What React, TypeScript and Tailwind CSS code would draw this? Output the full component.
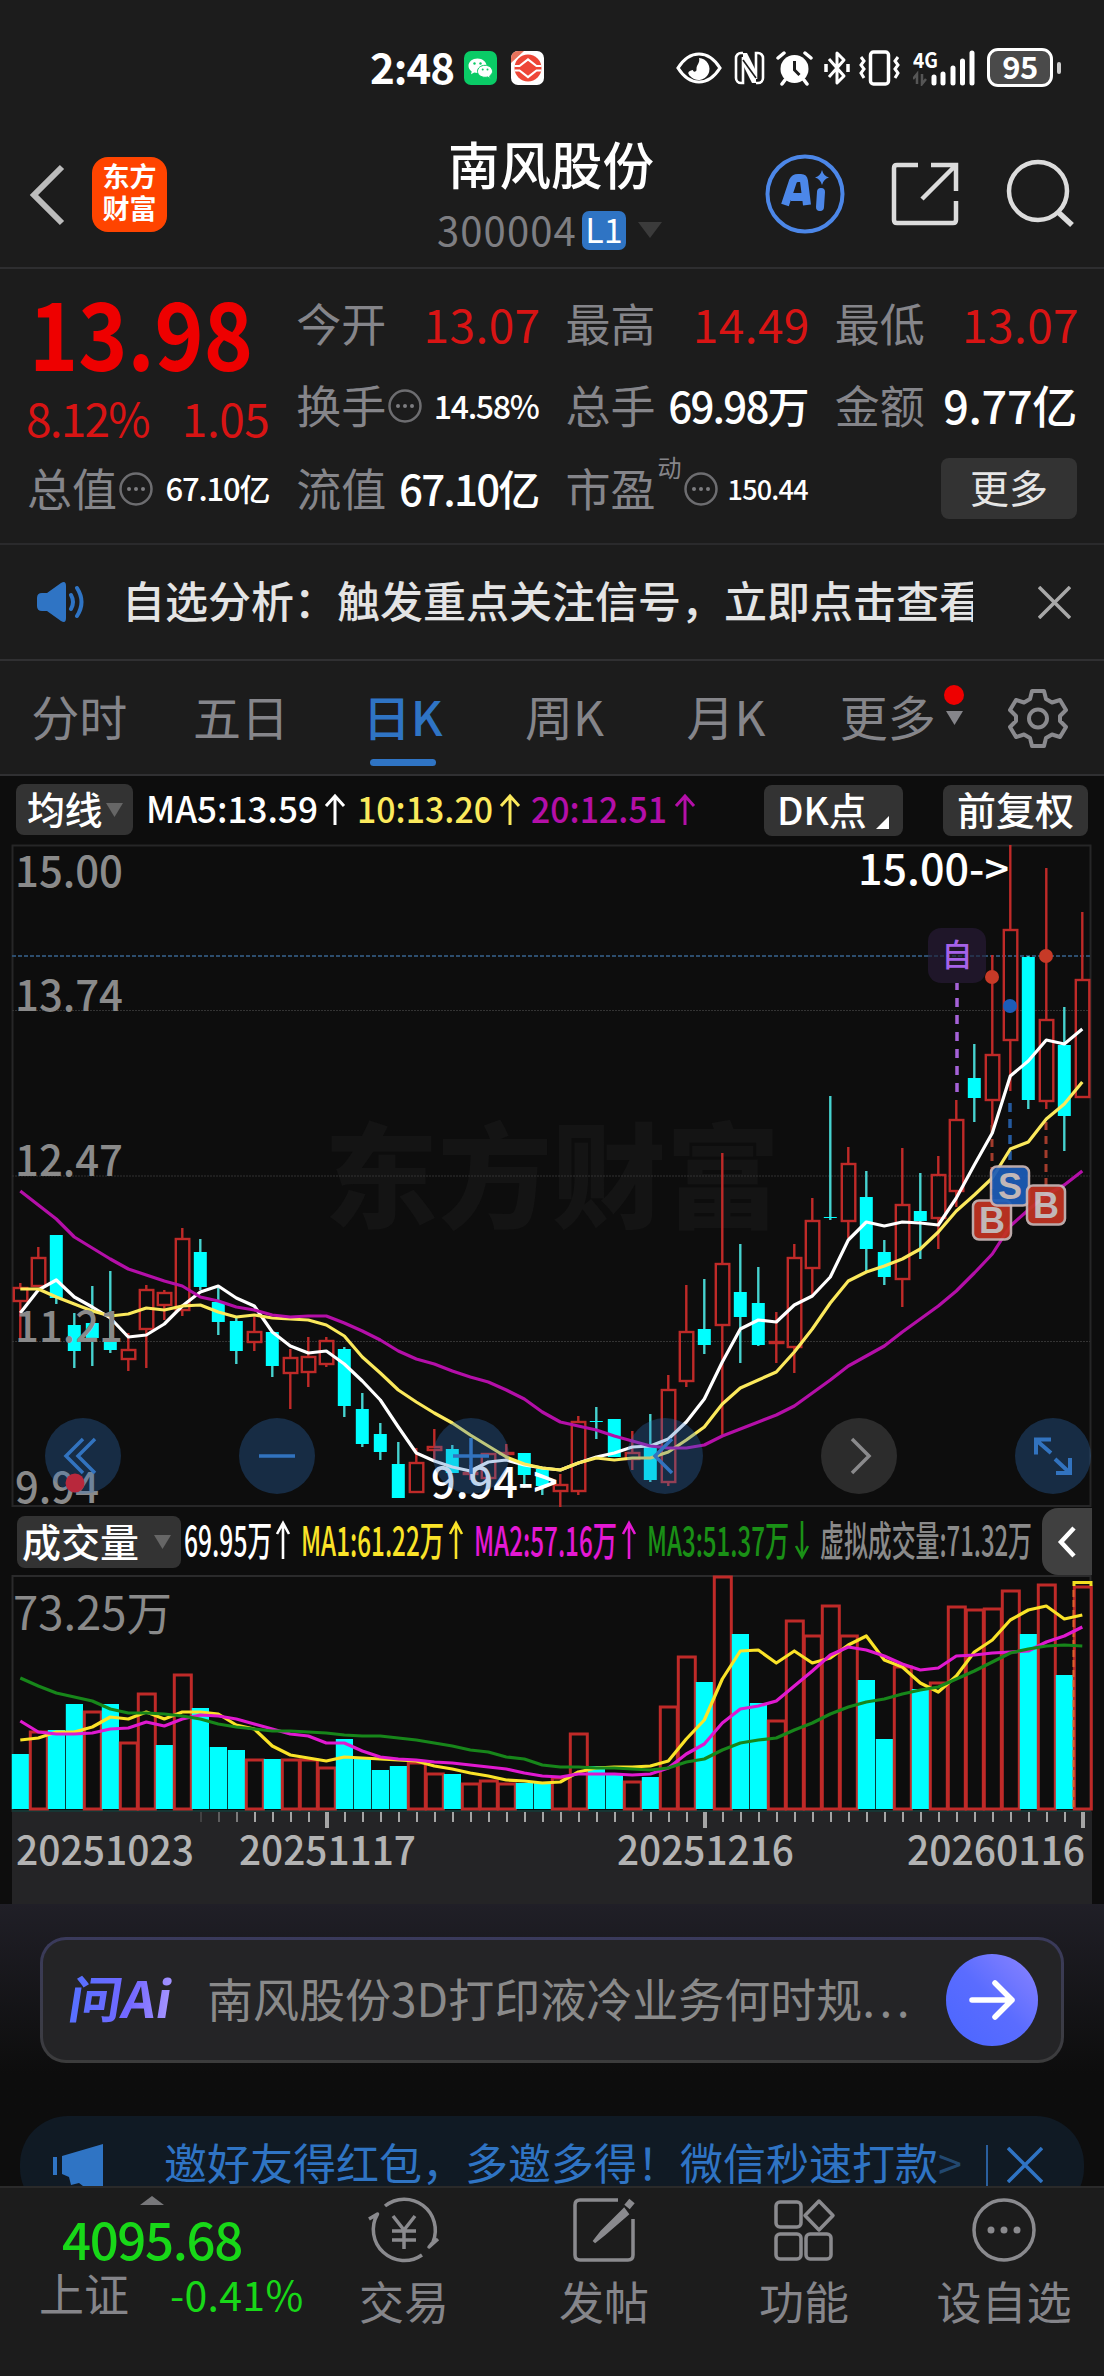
import React from 'react';

type Row = [up: 0 | 1, high: number, top: number, bottom: number, low: number, volTop: number];

// One row per trading day: direction, wick top, body top, body bottom, wick bottom, volume bar top
const DAYS: Row[] = [
  [1, 1283, 1287, 1302, 1339, 1754], [1, 1247, 1257, 1287, 1287, 1731], [0, 1235, 1235, 1298, 1304, 1730],
  [0, 1313, 1325, 1351, 1368, 1704], [0, 1286, 1323, 1338, 1366, 1711], [0, 1271, 1338, 1350, 1353, 1704],
  [1, 1333, 1349, 1360, 1371, 1742], [1, 1285, 1289, 1330, 1368, 1693], [1, 1290, 1292, 1306, 1320, 1745],
  [1, 1228, 1238, 1311, 1316, 1674], [0, 1239, 1252, 1287, 1290, 1708], [0, 1288, 1302, 1322, 1335, 1747],
  [0, 1317, 1321, 1351, 1364, 1750], [1, 1317, 1331, 1343, 1351, 1759], [0, 1332, 1332, 1366, 1377, 1759],
  [1, 1349, 1357, 1374, 1409, 1759], [1, 1337, 1356, 1373, 1387, 1759], [1, 1337, 1340, 1365, 1367, 1767],
  [0, 1347, 1349, 1406, 1417, 1739], [0, 1393, 1409, 1444, 1447, 1758], [0, 1423, 1434, 1452, 1460, 1770],
  [0, 1442, 1464, 1498, 1498, 1766], [1, 1448, 1462, 1493, 1493, 1762], [1, 1429, 1446, 1451, 1462, 1773],
  [0, 1445, 1449, 1473, 1473, 1774], [1, 1465, 1472, 1474, 1480, 1783], [1, 1453, 1453, 1479, 1483, 1780],
  [1, 1444, 1452, 1454, 1460, 1783], [0, 1453, 1453, 1475, 1488, 1783], [0, 1467, 1469, 1486, 1495, 1783],
  [1, 1474, 1484, 1492, 1507, 1777], [1, 1416, 1421, 1492, 1495, 1733], [0, 1407, 1421, 1422, 1439, 1766],
  [0, 1419, 1419, 1457, 1457, 1775], [1, 1431, 1452, 1460, 1470, 1781], [0, 1414, 1447, 1480, 1482, 1777],
  [1, 1375, 1389, 1483, 1486, 1706], [1, 1285, 1331, 1382, 1387, 1656], [0, 1279, 1329, 1345, 1354, 1682],
  [1, 1153, 1263, 1326, 1436, 1576], [0, 1244, 1292, 1317, 1363, 1634], [0, 1267, 1303, 1345, 1346, 1703],
  [1, 1312, 1341, 1344, 1363, 1720], [1, 1244, 1257, 1348, 1373, 1620], [1, 1198, 1220, 1269, 1297, 1635],
  [0, 1096, 1217, 1218, 1220, 1605], [1, 1147, 1163, 1222, 1238, 1635], [0, 1171, 1197, 1249, 1271, 1680],
  [0, 1240, 1252, 1277, 1285, 1739], [1, 1148, 1204, 1280, 1307, 1666], [0, 1173, 1211, 1221, 1259, 1689],
  [1, 1156, 1174, 1219, 1249, 1682], [1, 1100, 1119, 1192, 1207, 1606], [0, 1044, 1078, 1098, 1122, 1609],
  [1, 955, 1054, 1101, 1125, 1608], [1, 845, 929, 1041, 1091, 1590], [0, 956, 957, 1100, 1109, 1634],
  [1, 868, 1019, 1102, 1109, 1584], [0, 1007, 1045, 1116, 1151, 1675], [1, 912, 979, 1098, 1098, 1586],
];

// Volume bars are coloured by close against the previous close, which differs from the candle here and there
const VOL_DOWN = [0, 2, 3, 5, 8, 10, 11, 12, 14, 18, 19, 20, 21, 24, 28, 29, 32, 33, 35, 38, 40, 41, 47, 48, 50, 56, 58];

const MA5 = [1313, 1290, 1280, 1297, 1307, 1318, 1337, 1335, 1324, 1306, 1292, 1286, 1298, 1306, 1332, 1346, 1353, 1351, 1364, 1381, 1400, 1427, 1453, 1461, 1467, 1471, 1462, 1460, 1465, 1468, 1470, 1463, 1457, 1453, 1447, 1446, 1439, 1422, 1399, 1362, 1329, 1320, 1322, 1305, 1296, 1277, 1240, 1222, 1226, 1222, 1223, 1225, 1198, 1165, 1133, 1076, 1061, 1040, 1044, 1029];
const MA10 = [1289, 1289, 1297, 1304, 1311, 1316, 1314, 1308, 1310, 1306, 1305, 1312, 1317, 1315, 1318, 1319, 1320, 1325, 1336, 1357, 1373, 1390, 1402, 1413, 1423, 1435, 1446, 1457, 1464, 1468, 1470, 1463, 1458, 1460, 1458, 1458, 1452, 1440, 1427, 1404, 1388, 1380, 1372, 1352, 1329, 1303, 1281, 1272, 1266, 1259, 1249, 1232, 1211, 1195, 1178, 1149, 1142, 1119, 1104, 1082];
const MA20 = [1191, 1205, 1219, 1237, 1248, 1259, 1269, 1275, 1281, 1286, 1297, 1301, 1307, 1310, 1315, 1317, 1316, 1316, 1323, 1331, 1340, 1351, 1359, 1364, 1371, 1377, 1382, 1390, 1399, 1412, 1422, 1426, 1430, 1436, 1441, 1446, 1448, 1448, 1445, 1436, 1429, 1422, 1415, 1406, 1393, 1380, 1366, 1356, 1346, 1332, 1319, 1306, 1291, 1273, 1254, 1226, 1210, 1195, 1185, 1171];

const VMA1 = [1740, 1738, 1732, 1732, 1727, 1717, 1719, 1712, 1719, 1712, 1712, 1714, 1725, 1729, 1746, 1755, 1758, 1761, 1757, 1758, 1759, 1760, 1761, 1766, 1769, 1773, 1776, 1780, 1781, 1783, 1782, 1772, 1768, 1767, 1767, 1766, 1761, 1739, 1720, 1679, 1651, 1650, 1663, 1651, 1663, 1658, 1645, 1636, 1660, 1667, 1683, 1692, 1676, 1652, 1640, 1620, 1610, 1606, 1619, 1615];
const VMA2 = [1721, 1732, 1734, 1734, 1733, 1729, 1728, 1722, 1726, 1719, 1715, 1716, 1719, 1724, 1729, 1734, 1736, 1743, 1743, 1751, 1757, 1759, 1760, 1762, 1763, 1765, 1767, 1769, 1773, 1776, 1777, 1774, 1774, 1774, 1775, 1774, 1768, 1754, 1744, 1723, 1709, 1706, 1701, 1686, 1671, 1655, 1647, 1650, 1656, 1664, 1670, 1668, 1656, 1655, 1653, 1652, 1651, 1642, 1636, 1627];
const VMA3 = [1678, 1686, 1693, 1697, 1701, 1709, 1713, 1713, 1714, 1716, 1719, 1724, 1727, 1729, 1731, 1731, 1732, 1733, 1735, 1736, 1736, 1738, 1740, 1743, 1746, 1750, 1752, 1757, 1759, 1765, 1767, 1767, 1768, 1768, 1769, 1770, 1768, 1762, 1759, 1750, 1743, 1740, 1738, 1730, 1723, 1714, 1707, 1702, 1699, 1694, 1690, 1687, 1679, 1671, 1662, 1653, 1649, 1646, 1645, 1646];

const dayX = (i: number) => 20.3 + i * 18;
const toPoints = (ys: number[]) => ys.map((y, i) => `${dayX(i)},${y}`).join(' ');

const RED = '#bf2a28';
const CYAN = '#00ffff';

interface LineProps {
  ys: number[];
  color: string;
}

const Line: React.FC<LineProps> = ({ ys, color }) => (
  <polyline points={toPoints(ys)} fill="none" stroke={color} strokeWidth="3.2" strokeLinejoin="round" />
);

interface FitTextProps {
  x: number;
  y: number;
  width: number;
  size: number;
  color: string;
  weight?: number;
  children: string;
}

const FitText: React.FC<FitTextProps> = ({ x, y, width, size, color, weight = 500, children }) => (
  <text x={x} y={y} fontSize={size} fontWeight={weight} fill={color} textLength={width} lengthAdjust="spacingAndGlyphs">
    {children}
  </text>
);

const StatusBar = () => (
  <div className="flex h-[135px] items-center pl-[370px] text-white">
    <span className="w-[94px] pb-[4px] text-[42px] leading-[48px] font-bold tracking-[-1px]">2:48</span>
    <svg className="h-[34px] w-[33px]" viewBox="0 0 33 34">
      <rect width="33" height="34" rx="7" fill="#0acb66" />
      <path d="M13.5 7.500c-5 0-9 3.200-9 7.300 0 2.300 1.200 4.200 3.200 5.600l-.7 2.900 3.200-1.800c1 .3 2.100.5 3.300.5 5 0 9-3.200 9-7.200s-4-7.300-9-7.300z" fill="#fff" />
      <path d="M21 14.300c-4.200 0-7.500 2.700-7.500 6s3.300 6 7.500 6c.9 0 1.800-.1 2.600-.4l2.700 1.500-.6-2.500c1.700-1.100 2.800-2.800 2.800-4.600 0-3.300-3.300-6-7.500-6z" fill="#fff" stroke="#0acb66" />
      <g fill="#0acb66">
        <circle cx="10.500" cy="12.500" r="1.200" /><circle cx="16.500" cy="12.500" r="1.200" />
        <circle cx="18.700" cy="18.500" r="1" /><circle cx="23.500" cy="18.500" r="1" />
      </g>
    </svg>
    <svg className="ml-[14px] h-[34px] w-[33px]" viewBox="0 0 33 34">
      <rect width="33" height="34" rx="7" fill="#fff" />
      <path d="M0 12V7a7 7 0 0 1 7-7h6z" fill="#e8735c" />
      <circle cx="17" cy="17" r="13.500" fill="#ee4637" />
      <path d="M3.500 15h5l8.500-6.500 8.500 6.500h5M3.500 19.500h5L17 26l8.500-6.500h5" fill="none" stroke="#fff" strokeWidth="2.200" />
      <path d="M17 11.500l7 5.700-7 5.800-7-5.800z" fill="#ee4637" />
    </svg>
    <svg className="ml-[132px] h-[32px] w-[46px]" viewBox="0 0 46 32">
      <path d="M2 16C8 6.500 15 2 23 2s15 4.500 21 14c-6 9.500-13 14-21 14S8 25.500 2 16z" fill="none" stroke="#fff" strokeWidth="3.200" />
      <path d="M23 6c1 4-1 6-2 8-1 2 0 4-1 5s-3 1-3-1c-5 1-6 3-3 6a11 11 0 1 0 9-18z" fill="#fff" />
    </svg>
    <svg className="ml-[12px] h-[34px] w-[31px]" viewBox="0 0 31 34">
      <path d="M9 2H7a5 5 0 0 0-5 5v20a5 5 0 0 0 5 5h2V6M22 32h2a5 5 0 0 0 5-5V7a5 5 0 0 0-5-5h-2v26" fill="none" stroke="#fff" strokeWidth="2.600" />
      <path d="M9 2h4l9 18v12h-4L9 14z" fill="#fff" />
      <path d="M9 9l13 18" stroke="#1c1c1c" strokeWidth="1.600" />
    </svg>
    <svg className="ml-[11px] h-[36px] w-[37px]" viewBox="0 0 37 36">
      <circle cx="18.500" cy="19" r="14" fill="#fff" />
      <path d="M18.500 11v9l5 5" fill="none" stroke="#1c1c1c" strokeWidth="3" />
      <path d="M2 8l6-5M35 8l-6-5M9 30l-3 4M28 30l3 4" stroke="#fff" strokeWidth="3.500" strokeLinecap="round" />
    </svg>
    <svg className="ml-[11px] h-[36px] w-[26px]" viewBox="0 0 26 36" fill="none" stroke="#fff" strokeWidth="3">
      <path d="M5 9l15 17-7 7V3l7 7L5 27" strokeLinejoin="round" />
      <path d="M2 14v8M24 14v8" strokeWidth="3.500" />
    </svg>
    <svg className="ml-[8px] h-[36px] w-[43px]" viewBox="0 0 43 36" fill="none" stroke="#fff" strokeWidth="3.500">
      <rect x="12.500" y="2" width="18" height="32" rx="3" />
      <path d="M3 7l3 4-3 4 3 4-3 4 3 5M40 7l-3 4 3 4-3 4 3 4-3 5" strokeWidth="3" />
    </svg>
    <svg className="ml-[12px] h-[36px] w-[62px]" viewBox="0 0 62 36">
      <text x="0" y="18" fontSize="21" fontWeight="bold" fill="#fff" textLength="25" lengthAdjust="spacingAndGlyphs">4G</text>
      <path d="M4 34V24l-4 5M9 24v10l4-5" stroke="#555" strokeWidth="2.500" fill="none" />
      <path d="M21 33v-6M30 33V24M40 33V18M49.500 33V11M59 33V3" stroke="#fff" strokeWidth="5" strokeLinecap="round" />
    </svg>
    <div className="ml-[12px] h-[39px] w-[66px] rounded-[11px] border-[3px] border-white bg-[#4a4a4a] text-center text-[31px] leading-[30px] font-bold tracking-[-0.500px]">
      95
    </div>
    <div className="ml-1 h-3 w-1 rounded-full bg-[#ccc]" />
  </div>
);

const Header = () => (
  <header className="flex h-[134px] items-start border-b-2 border-[#2e2e30] pt-[4px]">
    <svg className="mt-[24px] ml-[28px] h-[64px] w-[40px]" viewBox="0 0 40 64">
      <path d="M34 4L6 32l28 28" fill="none" stroke="#bcbcbc" strokeWidth="6" />
    </svg>
    <div className="mt-[18px] ml-[24px] flex h-[75px] w-[75px] flex-col items-center rounded-2xl bg-[#ff4400] pt-[3px] text-[27px] leading-[32px] font-bold text-white">
      <span>东方</span>
      <span>财富</span>
    </div>
    <div className="ml-[277px] flex w-[264px] flex-col pl-[4px]">
      <h1 className="text-[51.500px] leading-[48px] font-medium text-white">南风股份</h1>
      <div className="mt-[24px] flex h-[38px] items-center text-[40px] leading-[38px] text-[#7e7e82]">
        <span className="-ml-[11px] w-[139px] pb-[2px] tracking-[1.100px]">300004</span>
        <span className="ml-[6px] h-[39px] w-[44px] rounded-[7px] bg-[#2f74c4] text-center text-[34px] leading-[36px] text-white">L1</span>
        <svg className="ml-[12px] h-[16px] w-[24px]" viewBox="0 0 24 16"><path d="M0 0h24L12 16z" fill="#3b3b3b" /></svg>
      </div>
    </div>
    <svg className="mt-[14px] ml-[56px] h-[82px] w-[82px]" viewBox="0 0 82 82">
      <circle cx="41" cy="41" r="37.500" fill="none" stroke="#4c87e8" strokeWidth="4" />
      <path d="M21 52l8-24q1.500-3 5-3h3q2.500 0 3 3l3 24M27 44h14" fill="none" stroke="#4c87e8" strokeWidth="8" strokeLinejoin="round" />
      <path d="M57 39l-1 15" stroke="#4c87e8" strokeWidth="8" strokeLinecap="round" />
      <path d="M58 17q1.500 6 7 7.500-5.500 1.500-7 7.500-1.500-6-7-7.500 5.500-1.500 7-7.500z" fill="#4c87e8" />
    </svg>
    <svg className="mt-[20px] ml-[42px] h-[70px] w-[72px]" viewBox="0 0 72 70" fill="none" stroke="#dcdcdc" strokeWidth="4.500">
      <path d="M30 6H9q-3 0-3 3v52q0 3 3 3h56q3 0 3-3V42M43 6h25v26M67 7L34 40" />
    </svg>
    <svg className="mt-[19px] ml-[44px] h-[70px] w-[72px]" viewBox="0 0 72 70" fill="none" stroke="#dcdcdc" strokeWidth="4.500">
      <circle cx="34" cy="33" r="29" />
      <path d="M54 54l14 13" strokeWidth="5.500" />
    </svg>
  </header>
);

const Dots = () => (
  <svg className="-mt-[3px] ml-[2px] h-[34px] w-[34px] shrink-0" viewBox="0 0 34 34">
    <circle cx="17" cy="17" r="15.500" fill="none" stroke="#6d6d70" strokeWidth="2.500" />
    <g fill="#7d7d80"><circle cx="10" cy="17" r="2" /><circle cx="17" cy="17" r="2" /><circle cx="24" cy="17" r="2" /></g>
  </svg>
);

interface StatProps {
  label: string;
  value: string;
  valueClass: string;
  info?: boolean;
}

const Stat: React.FC<StatProps> = ({ label, value, valueClass, info }) => (
  <div className="flex h-[82.500px] items-center">
    <span className="pb-[5px] text-[45px] leading-[60px] whitespace-nowrap text-[#85858a]">{label}</span>
    {info && <Dots />}
    <span className={`ml-auto pb-[5px] leading-[60px] whitespace-nowrap ${valueClass}`}>{value}</span>
  </div>
);

const RED_VALUE = 'text-[46px] text-[#d81414] tracking-[0.400px] -mr-[2px]';
const BIG_VALUE = 'text-[42px] text-white font-medium tracking-[-1.800px]';
const SMALL_VALUE = 'text-[31px] text-white font-medium tracking-[-1.200px]';

const Quote = () => (
  <section className="grid h-[276px] grid-cols-4 gap-x-[27px] border-b-2 border-[#2a2a2c] px-[27px] pt-[15px]">
    <div>
      <svg className="block h-[106px] w-[242px]" viewBox="27 284 242 106">
        <FitText x={29} y={371} width={224} size={94} weight={700} color="#ee0000">13.98</FitText>
      </svg>
      <div className="flex h-[59px] items-center justify-between pb-[5px] text-[46px] leading-[54px] text-[#d81414]">
        <span className="-ml-[1px] tracking-[-1.800px]">8.12%</span>
        <span className="tracking-[-0.500px]">1.05</span>
      </div>
      <Stat label="总值" info value="67.10亿" valueClass={SMALL_VALUE} />
    </div>
    <div>
      <Stat label="今开" value="13.07" valueClass={RED_VALUE} />
      <Stat label="换手" info value="14.58%" valueClass="text-[32px] text-white font-medium tracking-[-1.300px]" />
      <Stat label="流值" value="67.10亿" valueClass={BIG_VALUE} />
    </div>
    <div>
      <Stat label="最高" value="14.49" valueClass={RED_VALUE} />
      <Stat label="总手" value="69.98万" valueClass={BIG_VALUE} />
      <div className="flex h-[82.500px] items-center">
        <span className="pb-[5px] text-[45px] leading-[60px] text-[#85858a]">市盈</span>
        <span className="-mt-[46px] ml-[2px] text-[24px] leading-[26px] text-[#85858a]">动</span>
        <Dots />
        <span className="ml-auto pb-[3px] text-[27px] leading-[40px] font-medium tracking-[-0.800px] text-white">150.44</span>
      </div>
    </div>
    <div>
      <Stat label="最低" value="13.07" valueClass={RED_VALUE} />
      <Stat label="金额" value="9.77亿" valueClass="text-[45px] text-white font-medium tracking-[-0.300px]" />
      <div className="flex h-[82.500px] items-center justify-end">
        <button className="-mt-[3px] h-[61px] w-[136px] rounded-lg bg-[#333333] pb-[4px] text-[39px] leading-[57px] text-[#e6e6e6]">更多</button>
      </div>
    </div>
  </section>
);

const Notice = () => (
  <section className="flex h-[116px] items-center border-b-2 border-[#303032]">
    <svg className="ml-[36px] h-[42px] w-[52px]" viewBox="0 0 52 42">
      <path d="M1 17q0-5 5-5h5L25 2q5-3 5 3v32q0 6-5 3L11 30H6q-5 0-5-5z" fill="#2f74c4" />
      <path d="M35 14q4 7 0 14M41 7q9 14 0 28" fill="none" stroke="#2f74c4" strokeWidth="4" strokeLinecap="round" />
    </svg>
    <p className="ml-[34px] w-[851px] overflow-hidden pb-[6px] text-[43px] leading-[62px] font-medium whitespace-nowrap text-[#e4e4e4]">
      自选分析：触发重点关注信号，立即点击查看
    </p>
    <svg className="ml-[65px] h-[33px] w-[33px]" viewBox="0 0 33 33">
      <path d="M1 1l31 31M32 1L1 32" stroke="#a8a8a8" strokeWidth="3.500" />
    </svg>
  </section>
);

const TABS = ['分时', '五日', '日K', '周K', '月K', '更多'];

const Tabs = () => (
  <nav className="flex h-[115px] border-b-2 border-[#303032]">
    {TABS.map((tab) => (
      <div
        key={tab}
        className={`relative flex w-[161.700px] items-center justify-center pr-[3px] pb-[5px] text-[48px] leading-[60px] ${tab === '日K' ? 'font-medium text-[#2f74c4]' : 'text-[#85858a]'}`}
      >
        {tab}
        {tab === '日K' && <span className="absolute bottom-[8px] h-[7px] w-[66px] rounded-full bg-[#2f74c4]" />}
        {tab === '更多' && (
          <span className="absolute top-[24px] left-[136px] flex flex-col items-center">
            <span className="h-5 w-5 rounded-full bg-[#ee0000]" />
            <svg className="mt-[6px] h-[14px] w-[17px]" viewBox="0 0 17 14"><path d="M0 0h17L8.500 14z" fill="#85858a" /></svg>
          </span>
        )}
      </div>
    ))}
    <svg className="mt-[27px] ml-[38px] h-[60px] w-[60px]" viewBox="0 0 60 60" fill="none" stroke="#8a8a8e" strokeWidth="4" strokeLinejoin="round">
      <path d="M24 3h12l2 8 6 3.500 8-2.500 6 10-6 6v5l6 6-6 10-8-2.500-6 3.500-2 8H24l-2-8-6-3.500L8 49 2 39l6-6v-5l-6-6L8 12l8 2.500 6-3.500z" />
      <circle cx="30" cy="30.500" r="9" />
    </svg>
  </nav>
);

const MaRow = () => (
  <div className="flex h-[68px] items-start pt-[8px] text-[38px] leading-[47px] font-medium text-white">
    <div className="ml-[16px] flex h-[51px] w-[117px] items-center rounded-lg bg-[#333333] pl-[11px]">
      <span className="pb-[4px] tracking-[-0.500px]">均线</span>
      <svg className="ml-[4px] h-[14px] w-[17px]" viewBox="0 0 17 14"><path d="M0 0h17L8.500 14z" fill="#666" /></svg>
    </div>
    <svg className="ml-[13px] h-[51px] w-[560px]" viewBox="146 784 560 51">
      <FitText x={146} y={823} width={172} size={36} color="#fff">MA5:13.59</FitText>
      <FitText x={357} y={823} width={136} size={36} color="#fbe95c">10:13.20</FitText>
      <FitText x={531} y={823} width={136} size={36} color="#b40fa8">20:12.51</FitText>
      <g fill="none" strokeWidth="3">
        <path d="M335 825V796M326 806l9-10 9 10" stroke="#fff" />
        <path d="M510 825V796M501 806l9-10 9 10" stroke="#fbe95c" />
        <path d="M685 825V796M676 806l9-10 9 10" stroke="#b40fa8" />
      </g>
    </svg>
    <div className="mt-px ml-[58px] flex h-[51px] w-[139px] items-center rounded-lg bg-[#333333] pl-[13px]">
      <span className="pb-[4px]">DK点</span>
      <svg className="mt-[24px] ml-[9px] h-[13px] w-[13px]" viewBox="0 0 13 13"><path d="M13 0v13H0z" fill="#fff" /></svg>
    </div>
    <div className="mt-px ml-[40px] h-[51px] w-[145px] rounded-lg bg-[#333333] text-center text-[39px]">前复权</div>
  </div>
);

interface BadgeProps {
  x: number;
  y: number;
  letter: 'B' | 'S';
}

const TradeBadge: React.FC<BadgeProps> = ({ x, y, letter }) => (
  <g opacity="0.93">
    <rect x={x - 19} y={y - 19.500} width="38" height="39" rx="6" fill={letter === 'B' ? '#c23322' : '#1c5cb8'} stroke="#c9b5b5" strokeWidth="2.500" />
    <text x={x} y={y + 13} fontSize="36" fontWeight="bold" textAnchor="middle" fill="#cfc4c4" className="font-['Liberation_Sans',sans-serif]">{letter}</text>
  </g>
);

const CONTROL_X = [83, 277, 471, 665, 1053];

const CandleChart = () => (
  <svg className="block h-[664px] w-[1104px]" viewBox="0 844 1104 664">
    <text x="324" y="1219" fontSize="114" fontWeight="900" fill="#141414" textLength="456">东方财富</text>
    <path d="M12.500 1506V845.500H1090.500V1506z" fill="none" stroke="#262627" strokeWidth="2" />
    <path d="M12 1010.500H1090M12 1176H1090M12 1341.500H1090" stroke="#333" strokeDasharray="2 1" />
    <path d="M12 956H1090" stroke="#2c4d6e" strokeWidth="2" strokeDasharray="4 2" />
    {DAYS.map(([up, high, top, bottom, low], i) => {
      const x = dayX(i);
      return up ? (
        <g key={i} fill="none" stroke={RED} strokeWidth="2.400">
          <path d={`M${x} ${high}V${top}M${x} ${bottom}V${low}`} />
          <rect x={x - 6.500} y={top + 1} width="13.500" height={Math.max(bottom - top - 2, 1)} />
        </g>
      ) : (
        <g key={i}>
          <path d={`M${x} ${high}V${low}`} stroke="#46d3d0" strokeWidth="2.400" />
          <rect x={x - 6.500} y={top} width="13" height={bottom - top} fill={CYAN} />
        </g>
      );
    })}
    <path d="M957 981V1100" stroke="#a562d8" strokeWidth="3.500" strokeDasharray="9 8" />
    <path d="M1010 1103V1168" stroke="#245a9e" strokeWidth="3.500" strokeDasharray="9 7" />
    <path d="M992 1125V1202M1046 1122V1186" stroke="#a33c2c" strokeWidth="3" strokeDasharray="8 6" />
    <Line ys={MA5} color="#ffffff" />
    <Line ys={MA10} color="#fbe95c" />
    <Line ys={MA20} color="#b40fa8" />
    <circle cx="992" cy="977" r="7" fill="#c73a27" />
    <circle cx="1046" cy="956" r="7" fill="#c73a27" />
    <circle cx="1010" cy="1006" r="7" fill="#1c5cb8" />
    <rect x="928" y="928" width="58" height="55" rx="13" fill="#1f1629" />
    <path d="M928 956H986" stroke="#2c4d6e" strokeWidth="1" strokeDasharray="4 2" />
    <text x="957" y="966" fontSize="31" textAnchor="middle" fill="#a562e8" fontWeight="500">自</text>
    <TradeBadge x={992} y={1220} letter="B" />
    <TradeBadge x={1010} y={1186} letter="S" />
    <TradeBadge x={1046} y={1205} letter="B" />
    <g>
      <FitText x={15} y={887} width={108} size={43} color="#8a8a8a">15.00</FitText>
      <FitText x={15} y={1011} width={108} size={43} color="#8a8a8a">13.74</FitText>
      <FitText x={15} y={1176} width={108} size={43} color="#8a8a8a">12.47</FitText>
      <FitText x={15} y={1342} width={108} size={43} color="#8a8a8a">11.21</FitText>
      <FitText x={15} y={1503} width={84} size={43} color="#8a8a8a">9.94</FitText>
      <FitText x={858} y={885} width={151} size={43} color="#fff">{'15.00->'}</FitText>
      <FitText x={431} y={1498} width={127} size={43} color="#fff">{'9.94->'}</FitText>
    </g>
    {CONTROL_X.map((cx) => (
      <circle key={cx} cx={cx} cy="1456" r="38" fill="#2f74c4" fillOpacity="0.3" />
    ))}
    <circle cx="75" cy="1483" r="9.500" fill="#b8283c" />
    <circle cx="859" cy="1456" r="38" fill="#2c2c2c" />
    <g fill="none" stroke="#3273bf" strokeWidth="3.500">
      <path d="M83 1439l-17 17 17 17M95 1439l-17 17 17 17" />
      <path d="M259 1456h36M453 1456h36M471 1438v36" />
      <path d="M672 1439l-17 17 17 17" />
      <path d="M852 1439l17 17-17 17" stroke="#8a8a8c" />
      <path d="M1051 1439.500h-15v15M1036 1440l15 13M1056 1473h14v-15M1070 1473l-15-14" strokeWidth="4" />
    </g>
  </svg>
);

const VolumeRow = () => (
  <div className="flex h-[67px] items-start">
    <div className="mt-[8px] ml-[17px] flex h-[52px] w-[164px] items-center rounded-lg bg-[#333333] pl-[5px] text-[39px] leading-[48px] font-medium text-white">
      <span className="pb-[4px]">成交量</span>
      <svg className="ml-[15px] h-[14px] w-[17px]" viewBox="0 0 17 14"><path d="M0 0h17L8.500 14z" fill="#666" /></svg>
    </div>
    <svg className="h-[67px] w-[854px]" viewBox="181 1508 854 67">
      <FitText x={184} y={1556} width={88} size={41} color="#fff">69.95万</FitText>
      <FitText x={301} y={1556} width={143} size={41} color="#fae328">MA1:61.22万</FitText>
      <FitText x={474} y={1556} width={143} size={41} color="#e419d4">MA2:57.16万</FitText>
      <FitText x={647} y={1556} width={142} size={41} color="#1a9016">MA3:51.37万</FitText>
      <FitText x={820} y={1556} width={212} size={41} color="#8a8a8a">虚拟成交量:71.32万</FitText>
      <g fill="none" strokeWidth="2.600">
        <path d="M283 1559V1523M277 1534l6-11 6 11" stroke="#fff" />
        <path d="M456 1559V1523M450 1534l6-11 6 11" stroke="#fae328" />
        <path d="M629 1559V1523M623 1534l6-11 6 11" stroke="#e419d4" />
        <path d="M802 1521V1557M796 1546l6 11 6-11" stroke="#1a9016" />
      </g>
    </svg>
    <div className="mr-[12px] ml-auto flex h-[67px] w-[50px] items-center justify-center rounded-l-2xl bg-[#404040]">
      <svg className="h-[32px] w-[20px]" viewBox="0 0 20 32">
        <path d="M17 2L4 16l13 14" fill="none" stroke="#fff" strokeWidth="4.500" />
      </svg>
    </div>
  </div>
);

const VolumeChart = () => (
  <svg className="block h-[237px] w-[1104px]" viewBox="0 1575 1104 237">
    <path d="M12.500 1812V1576H1090.500V1812" fill="none" stroke="#2a2a2b" strokeWidth="2" />
    <path d="M12 1811H1091" stroke="#163634" strokeWidth="2" />
    {DAYS.map(([, , , , , top], i) => {
      const x = dayX(i);
      return VOL_DOWN.includes(i) ? (
        <rect key={i} x={x - 8.500} y={top} width="17.200" height={1809 - top} fill={CYAN} />
      ) : (
        <rect key={i} x={x - 8} y={top + 1} width="17" height={1808 - top} fill="none" stroke={RED} strokeWidth="3" />
      );
    })}
    <path d="M1074 1586V1582.500H1091V1586" fill="none" stroke="#f2e022" strokeWidth="3" />
    <path d="M1073.500 1590V1808" stroke="#e0622a" strokeWidth="2" strokeDasharray="7 3" />
    <Line ys={VMA1} color="#fae328" />
    <Line ys={VMA2} color="#e019d0" />
    <Line ys={VMA3} color="#17861a" />
    <FitText x={13} y={1630} width={159} size={46} weight={400} color="#8a8a8a">73.25万</FitText>
  </svg>
);

const BIG_TICKS = [17, 38, 59];

const DateAxis = () => (
  <div className="h-[92px] px-[12px]">
    <svg className="block h-[92px] w-[1080px] bg-[#242426]" viewBox="12 1812 1080 92">
      {Array.from({ length: 50 }, (_, n) => n + 10).map((i) => {
        const big = BIG_TICKS.includes(i);
        return (
          <path
            key={i}
            d={`M${dayX(i) + 0.700} 1812V${big ? 1828 : 1822}`}
            stroke="#b3b3b3"
            strokeWidth={big ? 4 : 2}
            opacity={i < 13 ? (i - 9) * 0.2 : 0.9}
          />
        );
      })}
      <FitText x={16} y={1865} width={178} size={41} color="#b3b3b3">20251023</FitText>
      <FitText x={239} y={1865} width={177} size={41} color="#b3b3b3">20251117</FitText>
      <FitText x={617} y={1865} width={177} size={41} color="#b3b3b3">20251216</FitText>
      <FitText x={907} y={1865} width={178} size={41} color="#b3b3b3">20260116</FitText>
    </svg>
  </div>
);

const AskAi = () => (
  <section className="h-[212px] bg-linear-to-b from-[#201f27] to-[#0d0d0d] to-80% px-[40px] pt-[33px]">
    <div className="h-[126px] rounded-[26px] bg-linear-to-b from-[#3a3a5c] to-[#3c3c3c] p-[3px]">
      <div className="flex h-full items-center rounded-[23px] bg-[#242426] pl-[20px]">
        <svg className="h-[60px] w-[116px]" viewBox="0 0 116 60">
          <defs>
            <linearGradient id="ask" x1="0" x2="1" y1="0" y2="0">
              <stop offset="0" stopColor="#5570ff" />
              <stop offset="0.600" stopColor="#7468ff" />
              <stop offset="1" stopColor="#a796ff" />
            </linearGradient>
          </defs>
          <text x="11" y="48" fontSize="50" fontWeight="700" fill="url(#ask)" textLength="103" lengthAdjust="spacingAndGlyphs" transform="skewX(-9)">
            问Ai
          </text>
        </svg>
        <p className="ml-[28px] pb-[6px] text-[46px] leading-[60px] whitespace-nowrap text-[#8a8a8a]">
          南风股份3D打印液冷业务何时规<span className="tracking-[4.500px]">...</span>
        </p>
        <div className="mr-[23px] ml-auto flex h-[92px] w-[92px] items-center justify-center rounded-full bg-linear-to-tr from-[#4a66ff] via-[#5a6cff] to-[#8c84ff]">
          <svg className="h-[44px] w-[48px]" viewBox="0 0 48 44" fill="none" stroke="#fff" strokeWidth="5.500" strokeLinecap="round" strokeLinejoin="round">
            <path d="M4 22h40M27 5l17 17-17 17" />
          </svg>
        </div>
      </div>
    </div>
  </section>
);

const Promo = () => (
  <section className="h-[70px] overflow-hidden px-[20px]">
    <div className="flex h-[100px] items-start rounded-[48px] bg-[#101a24] pl-[33px] text-[#2f74c4]">
      <svg className="mt-[28px] h-[42px] w-[50px]" viewBox="0 0 50 42">
        <path d="M0 13h4v18H0zM9 12L50 0v42H30l-4-3-8 2-2-8-7-3z" fill="#2f74c4" />
      </svg>
      <p className="mt-[14px] ml-[61px] w-[806px] overflow-hidden text-[43px] leading-[62px] whitespace-nowrap">
        邀好友得红包，多邀多得！微信秒速打款
        <span className="text-[#22486f]">&gt;</span>
      </p>
      <span className="mt-[29px] ml-[16px] h-[41px] w-[2px] bg-[#2a5f9e]" />
      <svg className="mt-[31px] ml-[19px] h-[36px] w-[36px]" viewBox="0 0 36 36">
        <path d="M1 1l34 34M35 1L1 35" stroke="#2f74c4" strokeWidth="3.500" />
      </svg>
    </div>
  </section>
);

interface NavItemProps {
  label: string;
  children: React.ReactNode;
}

const NavItem: React.FC<NavItemProps> = ({ label, children }) => (
  <div className="flex w-[200px] flex-col items-center pt-[9px]">
    <svg className="h-[66px] w-[72px]" viewBox="0 0 72 66" fill="none" stroke="#8a8a8e" strokeWidth="3.500">
      {children}
    </svg>
    <span className="mt-[8px] text-[45px] leading-[60px] whitespace-nowrap text-[#85858a]">{label}</span>
  </div>
);

const BottomNav = () => (
  <footer className="flex h-[190px] border-t-2 border-[#2a2a2a] bg-[#1c1c1c]">
    <div className="flex w-[304px] flex-col">
      <svg className="mt-[8px] ml-[140px] h-[9px] w-[24px]" viewBox="0 0 24 9"><path d="M12 0l12 9H0z" fill="#77777a" /></svg>
      <span className="mt-[3px] ml-[62px] text-[51px] leading-[60px] font-medium tracking-[-1.400px] text-[#18d818]">4095.68</span>
      <div className="flex items-center leading-[50px]">
        <span className="ml-[39px] text-[45px] text-[#85858a]">上证</span>
        <span className="ml-[41px] text-[41px] tracking-[0.300px] text-[#18d818]">-0.41%</span>
      </div>
    </div>
    <NavItem label="交易">
      <path d="M17 9a31 31 0 0 1 48 36l-4 5 9-8M1 22l8.500-5A31 31 0 0 0 54 58" strokeLinejoin="round" />
      <path d="M25 19l11 14 11-14M24 34h24M24 43h24M36 33v19" />
    </NavItem>
    <NavItem label="发帖">
      <path d="M50 3H12q-5 0-5 5v50q0 5 5 5h48q5 0 5-5V22" />
      <path d="M56 13L34 35l-8 10 10-8 23-20z" fill="#8a8a8e" />
      <path d="M59 10l5-6" strokeWidth="7" />
    </NavItem>
    <NavItem label="功能">
      <rect x="8" y="5" width="25" height="25" rx="4" />
      <rect x="8" y="37" width="25" height="25" rx="4" />
      <rect x="38" y="37" width="25" height="25" rx="4" />
      <path d="M51 4l14 14.500L51 33 37 18.500z" strokeLinejoin="round" />
    </NavItem>
    <NavItem label="设自选">
      <circle cx="36" cy="33" r="30" />
      <g fill="#8a8a8e" stroke="none">
        <circle cx="23" cy="33" r="3.500" /><circle cx="36" cy="33" r="3.500" /><circle cx="49" cy="33" r="3.500" />
      </g>
    </NavItem>
  </footer>
);

const App: React.FC = () => (
  <div className="flex h-[2376px] w-[1104px] flex-col overflow-hidden bg-[#0d0d0d] font-['Noto_Sans_CJK_SC',sans-serif]">
    <div className="bg-[#1c1c1c]">
      <StatusBar />
      <Header />
      <Quote />
      <Notice />
      <Tabs />
    </div>
    <main className="h-[1128px] bg-[#0d0d0d]">
      <MaRow />
      <CandleChart />
      <VolumeRow />
      <VolumeChart />
      <DateAxis />
    </main>
    <AskAi />
    <Promo />
    <BottomNav />
  </div>
);

export default App;
